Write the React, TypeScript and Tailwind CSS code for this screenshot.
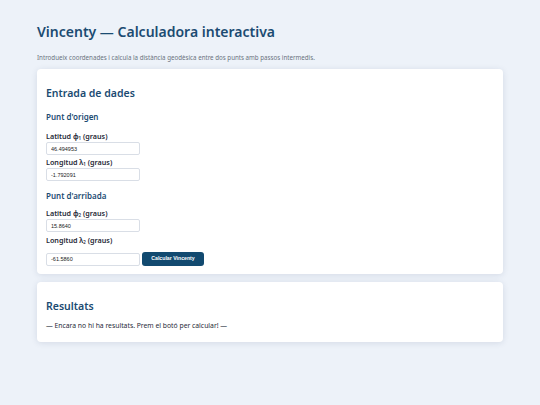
import React, { useState } from 'react';

const font = { fontFamily: '"Noto Sans", "Open Sans", sans-serif' };
const mono = { fontFamily: '"Liberation Sans", Arial, sans-serif' };

const Field = ({ label, value, onChange }: { label: React.ReactNode; value: string; onChange: (v: string) => void }) => (
  <div className="flex flex-col">
    <label className="text-[7.2px] font-semibold text-[#1f2937] leading-[12px]">{label}</label>
    <input
      value={value}
      onChange={e => onChange(e.target.value)}
      className="w-[94px] h-[13px] px-[4px] bg-white border border-[#d9dee6] rounded-[2px] text-[5.5px] text-[#222] outline-none"
      style={mono}
    />
  </div>
);

export default function App() {
  const [lat1, setLat1] = useState('46.494953');
  const [lon1, setLon1] = useState('-1.792091');
  const [lat2, setLat2] = useState('15.8640');
  const [lon2, setLon2] = useState('-61.5860');

  return (
    <div className="min-h-screen w-full bg-[#edf2f9] px-[37px] pt-[22px] pb-[20px]" style={font}>
      <h1 className="text-[14px] font-semibold text-[#1b4b72] leading-[20px]">Vincenty — Calculadora interactiva</h1>
      <p className="mt-[11px] text-[6.2px] text-[#6b7280] leading-[10px]">
        Introdueix coordenades i calcula la distància geodèsica entre dos punts amb passos intermedis.
      </p>

      <div className="mt-[6px] bg-white rounded-[4px] shadow-[0_1px_6px_rgba(30,50,90,0.12)] px-[9px] pt-[16px] pb-[8px]">
        <h2 className="text-[10.5px] font-semibold text-[#1b4b72] leading-[16px]">Entrada de dades</h2>

        <h3 className="mt-[9px] text-[8px] font-semibold text-[#1b4b72] leading-[14px]">Punt d'origen</h3>
        <div className="mt-[6px] flex flex-col gap-[1px]">
          <Field label={<>Latitud φ<sub className="text-[4.5px]">1</sub> (graus)</>} value={lat1} onChange={setLat1} />
          <Field label={<>Longitud λ<sub className="text-[4.5px]">1</sub> (graus)</>} value={lon1} onChange={setLon1} />
        </div>

        <h3 className="mt-[8px] text-[8px] font-semibold text-[#1b4b72] leading-[14px]">Punt d'arribada</h3>
        <div className="mt-[4px] flex flex-col gap-[1px]">
          <Field label={<>Latitud φ<sub className="text-[4.5px]">2</sub> (graus)</>} value={lat2} onChange={setLat2} />
          <label className="mt-[1px] text-[7.2px] font-semibold text-[#1f2937] leading-[12px]">
            Longitud λ<sub className="text-[4.5px]">2</sub> (graus)
          </label>
        </div>
        <div className="mt-[6px] flex items-center gap-[2px]">
          <input
            value={lon2}
            onChange={e => setLon2(e.target.value)}
            className="w-[94px] h-[13px] px-[4px] bg-white border border-[#d9dee6] rounded-[2px] text-[5.5px] text-[#222] outline-none"
            style={mono}
          />
          <button className="h-[14px] w-[62px] rounded-[3px] bg-[#124a70] text-white text-[5.2px] font-bold" style={mono}>
            Calcular Vincenty
          </button>
        </div>
      </div>

      <div className="mt-[8px] bg-white rounded-[4px] shadow-[0_1px_6px_rgba(30,50,90,0.12)] px-[9px] pt-[16px] pb-[10px]">
        <h2 className="text-[10.5px] font-semibold text-[#1b4b72] leading-[16px]">Resultats</h2>
        <p className="mt-[6px] text-[6.8px] text-[#1f2937] leading-[12px]">
          — Encara no hi ha resultats. Prem el botó per calcular! —
        </p>
      </div>
    </div>
  );
}
